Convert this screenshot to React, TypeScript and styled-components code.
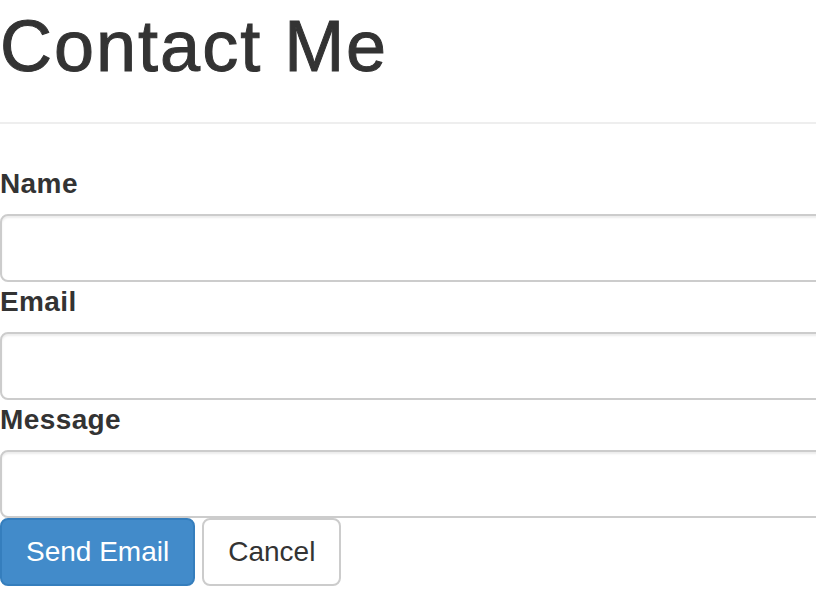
import styled, { createGlobalStyle } from 'styled-components';

const GlobalStyle = createGlobalStyle`
  html, body {
    margin: 0;
    padding: 0;
    overflow: hidden;
    background: #fff;
  }

  body {
    font-family: "Liberation Sans", Arial, Helvetica, sans-serif;
    color: #333;
  }
`;

const Page = styled.div`
  width: 900px;
  padding-top: 7px;
`;

const PageHeader = styled.header`
  padding-bottom: 18px;
  border-bottom: 2px solid #eee;
`;

const Title = styled.h1`
  margin: 0 0 18px;
  font-size: 72px;
  font-weight: 500;
  line-height: 1.1;
  letter-spacing: 2px;
  color: #333;
  -webkit-text-stroke: 1px #333;
`;

const Form = styled.form`
  margin-top: 40px;
`;

const Field = styled.div`
  display: flex;
  flex-direction: column;
`;

const Label = styled.label`
  display: block;
  margin-bottom: 10px;
  font-size: 28px;
  font-weight: 700;
  line-height: 40px;
  letter-spacing: 0.4px;
  color: #333;
`;

const Input = styled.input`
  box-sizing: border-box;
  display: block;
  width: 100%;
  height: 68px;
  padding: 12px 24px;
  font-family: inherit;
  font-size: 28px;
  color: #555;
  background: #fff;
  border: 2px solid #ccc;
  border-radius: 8px;
  box-shadow: inset 0 2px 2px rgba(0, 0, 0, 0.075);
  outline: none;
`;

const Actions = styled.div`
  display: flex;
  gap: 7px;
`;

const Button = styled.button<{ $primary?: boolean }>`
  box-sizing: border-box;
  height: 68px;
  padding: 12px 24px;
  font-family: inherit;
  font-size: 28px;
  line-height: 40px;
  white-space: nowrap;
  border: 2px solid ${(p) => (p.$primary ? '#357ebd' : '#ccc')};
  border-radius: 8px;
  background: ${(p) => (p.$primary ? '#428bca' : '#fff')};
  color: ${(p) => (p.$primary ? '#fff' : '#333')};
  cursor: pointer;
`;

export default function App() {
  return (
    <>
      <GlobalStyle />
      <Page>
        <PageHeader>
          <Title>Contact Me</Title>
        </PageHeader>
        <Form onSubmit={(e) => e.preventDefault()}>
          <Field>
            <Label htmlFor="name">Name</Label>
            <Input id="name" type="text" />
          </Field>
          <Field>
            <Label htmlFor="email">Email</Label>
            <Input id="email" type="email" />
          </Field>
          <Field>
            <Label htmlFor="message">Message</Label>
            <Input id="message" type="text" />
          </Field>
          <Actions>
            <Button type="submit" $primary>
              Send Email
            </Button>
            <Button type="button">Cancel</Button>
          </Actions>
        </Form>
      </Page>
    </>
  );
}
